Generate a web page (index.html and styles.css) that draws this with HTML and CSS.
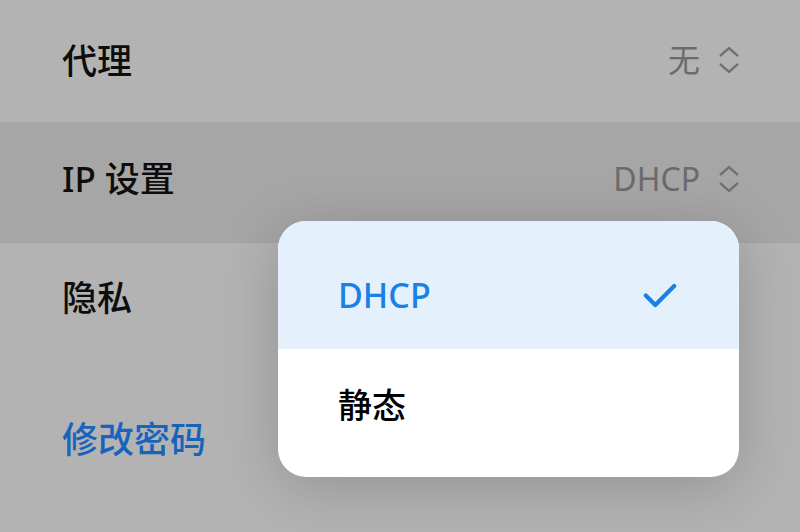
FILE: index.html
```html
<!DOCTYPE html>
<html lang="zh-CN">
<head>
    <meta charset="UTF-8">
    <meta name="viewport" content="width=device-width, initial-scale=1.0">
    <title>IP 设置</title>
    <link rel="stylesheet" href="styles.css">
</head>
<body>
    <div class="screen">
        <div class="row proxy">
            <span class="label">代理</span>
            <span class="value">无
                <svg class="updown" viewBox="0 0 24 32"><path d="M3 11 L12 3 L21 11 M3 21 L12 29 L21 21"/></svg>
            </span>
        </div>
        <div class="row active">
            <span class="label">IP 设置</span>
            <span class="value">DHCP
                <svg class="updown" viewBox="0 0 24 32"><path d="M3 11 L12 3 L21 11 M3 21 L12 29 L21 21"/></svg>
            </span>
        </div>
        <div class="row privacy">
            <span class="label">隐私</span>
        </div>
        <div class="row link-row">
            <span class="link">修改密码</span>
        </div>

        <!-- dropdown menu for IP 设置 -->
        <div class="menu">
            <div class="menu-item selected">
                <span>DHCP</span>
                <svg class="check" viewBox="0 0 36 26"><path d="M3 13 L13 23 L33 3"/></svg>
            </div>
            <div class="menu-item plain">
                <span>静态</span>
            </div>
        </div>
    </div>
</body>
</html>
```

FILE: styles.css
```css
body {
    margin: 0;
    font-family: "Noto Sans", "Noto Sans CJK SC", sans-serif;
    background-color: #b3b3b3;
}
.screen {
    position: relative;
    width: 800px;
    height: 532px;
    overflow: hidden;
    background-color: #b3b3b3;
}
.row {
    height: 122px;
    display: flex;
    align-items: center;
    justify-content: space-between;
    padding: 0 60px 0 62px;
    box-sizing: border-box;
    line-height: 1;
}
.row.proxy {
    padding-bottom: 2px;
}
.row.active {
    height: 121px;
    padding-bottom: 8px;
    background-color: #a6a6a6;
}
.row.privacy {
    padding-bottom: 14px;
}
.label {
    font-size: 35px;
    font-weight: 500;
    color: #0d0d0d;
}
.value {
    display: flex;
    align-items: center;
    gap: 18px;
    font-size: 32px;
    color: #6b6b6b;
}
.updown {
    width: 22px;
    height: 30px;
    fill: none;
    stroke: #707070;
    stroke-width: 2.6;
    stroke-linecap: round;
    stroke-linejoin: round;
}
.link-row {
    height: 142px;
    padding-top: 8px;
}
.link {
    font-size: 36px;
    font-weight: 500;
    color: #1864bd;
}
.menu {
    position: absolute;
    left: 278px;
    top: 221px;
    width: 461px;
    height: 256px;
    border-radius: 28px;
    overflow: hidden;
    background: #fff;
    box-shadow: 0 10px 60px rgba(0, 0, 0, 0.18);
}
.menu-item {
    height: 128px;
    box-sizing: border-box;
    display: flex;
    align-items: center;
    justify-content: space-between;
    padding: 0 62px 0 60px;
    font-size: 34px;
    font-weight: 500;
    line-height: 1;
    color: #000;
}
.menu-item.selected {
    padding-top: 20px;
    background-color: #e4f0fb;
    color: #1a80e6;
}
.menu-item.plain {
    padding-bottom: 16px;
}
.check {
    width: 34px;
    height: 25px;
    fill: none;
    stroke: #1a80e6;
    stroke-width: 4.5;
    stroke-linecap: round;
    stroke-linejoin: round;
}
```
